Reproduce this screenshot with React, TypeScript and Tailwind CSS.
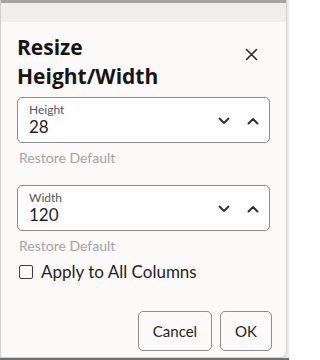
import React from "react";

function Chevron({ up }: { up?: boolean }) {
  return (
    <svg width="12" height="8" viewBox="0 0 12 8" fill="none">
      <path
        d={up ? "M1.5 6.5 L6 2 L10.5 6.5" : "M1.5 1.5 L6 6 L10.5 1.5"}
        stroke="#2b2b2b"
        strokeWidth="1.8"
        strokeLinecap="round"
        strokeLinejoin="round"
      />
    </svg>
  );
}

function NumberField({ label, value }: { label: string; value: string }) {
  return (
    <div className="mx-[16px] h-[46px] rounded-[5px] border border-[#8d8d8d] bg-white flex items-center">
      <div className="flex-1 pl-[11px] flex flex-col">
        <span className="text-[12px] leading-[14px] text-[#555]">{label}</span>
        <span className="text-[17px] leading-[20px] text-[#1f1f1f]">{value}</span>
      </div>
      <div className="flex items-center gap-[17px] pr-[10px] pt-[2px]">
        <Chevron />
        <Chevron up />
      </div>
    </div>
  );
}

export default function App() {
  return (
    <div
      className="w-[289px] h-[360px] bg-[#ebebeb] overflow-hidden relative"
      style={{ fontFamily: "Lato, 'Noto Sans', sans-serif" }}
    >
      <div className="absolute left-0 right-0 bottom-0 h-[2px] bg-[#6f6f6f]" />
      <div className="w-[287px] h-[358px] bg-[#fbfaf8] border-l border-r border-b border-[#cfcfcf] rounded-br-[6px] flex flex-col relative">
        <div className="h-[3px] bg-[#a3a3a3]" />
        <div className="h-[19px] bg-[#efeeec]" />
        <div className="flex items-start pl-[16px] pr-[28px] pt-[11px]">
          <h1
            className="flex-1 text-[21px] leading-[29px] font-bold text-[#161513]"
            style={{ fontFamily: "'Open Sans', 'Noto Sans', sans-serif" }}
          >
            Resize
            <br />
            Height/Width
          </h1>
          <button className="mt-[15px] w-[13px] h-[13px] flex items-center justify-center">
            <svg width="13" height="13" viewBox="0 0 13 13" fill="none">
              <path d="M1.5 1.5 L11.5 11.5 M11.5 1.5 L1.5 11.5" stroke="#2b2b2b" strokeWidth="1.6" strokeLinecap="round" />
            </svg>
          </button>
        </div>
        <div className="mt-[6px]">
          <NumberField label="Height" value="28" />
        </div>
        <div className="pl-[18px] mt-[6px] text-[14px] leading-[18px] text-[#a3a3a3]">Restore Default</div>
        <div className="mt-[18px]">
          <NumberField label="Width" value="120" />
        </div>
        <div className="pl-[18px] mt-[6px] text-[14px] leading-[18px] text-[#a3a3a3]">Restore Default</div>
        <div className="flex items-center pl-[18px] mt-[6px] gap-[8px]">
          <span className="w-[14px] h-[14px] border border-[#3a3a3a] rounded-[2px] bg-white" />
          <span className="text-[17px] leading-[22px] text-[#1f1f1f]">Apply to All Columns</span>
        </div>
        <div className="flex justify-end gap-[8px] pr-[14px] mt-[28px]">
          <button className="w-[74px] h-[40px] rounded-[5px] border border-[#8d8d8d] text-[15px] text-[#1f1f1f]">
            Cancel
          </button>
          <button className="w-[52px] h-[40px] rounded-[5px] border border-[#8d8d8d] text-[15px] text-[#1f1f1f]">
            OK
          </button>
        </div>
      </div>
    </div>
  );
}
